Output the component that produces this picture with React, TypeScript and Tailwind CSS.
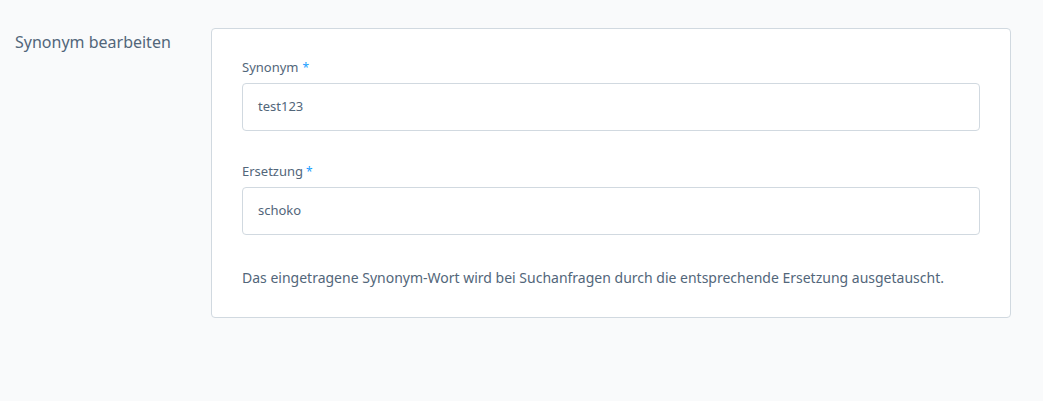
import React from "react";

export default function App() {
  return (
    <div className="w-[1043px] h-[401px] bg-[#f9fafb] text-[#52667a] [font-family:'Noto_Sans',sans-serif]">
      <div className="flex pt-[28px] pl-[15px] pr-[32px]">
        <div className="w-[196px] shrink-0 text-[16px] leading-[28px]">Synonym bearbeiten</div>
        <div className="flex-1 bg-white border border-[#d1d9e0] rounded-[4px] px-[30px] pt-[28px] pb-[28px]">
          <div className="mb-[30px]">
            <div className="text-[13px] leading-[20px] mb-[5px]">
              Synonym<span className="text-[#189eff] text-[12px] ml-[4px]">*</span>
            </div>
            <div className="h-[48px] border border-[#d1d9e0] rounded-[4px] flex items-center px-[15px] text-[13px]">test123</div>
          </div>
          <div className="mb-[32px]">
            <div className="text-[13px] leading-[20px] mb-[5px]">
              Ersetzung<span className="text-[#189eff] text-[12px] ml-[3px]">*</span>
            </div>
            <div className="h-[48px] border border-[#d1d9e0] rounded-[4px] flex items-center px-[15px] text-[13px]">schoko</div>
          </div>
          <p className="text-[14px] leading-[22px]">
            Das eingetragene Synonym-Wort wird bei Suchanfragen durch die entsprechende Ersetzung ausgetauscht.
          </p>
        </div>
      </div>
    </div>
  );
}
